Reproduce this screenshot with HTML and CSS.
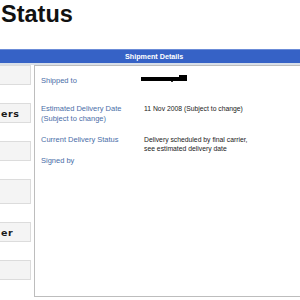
FILE: index.html
```html
<!DOCTYPE html>
<html lang="en">
<head>
    <meta charset="UTF-8">
    <title>Shipment Status</title>
    <link rel="stylesheet" href="styles.css">
</head>
<body>
    <div class="page">
        <h1 class="title">Status</h1>

        <div class="bar">Shipment Details</div>
        <div class="bar-line"></div>

        <div class="content">
            <!-- left menu, mostly outside the window -->
            <div class="sidebar">
                <div class="side-item"></div>
                <div class="side-item">ers</div>
                <div class="side-item"></div>
                <div class="side-item tall"></div>
                <div class="side-item">er</div>
                <div class="side-item"></div>
            </div>

            <div class="panel">
                <div class="details">
                    <div class="label">Shipped to</div>
                    <div class="value">
                        <svg class="redact" width="46" height="8" viewBox="0 0 46 8">
                            <rect x="0" y="2" width="40" height="4" fill="#000"/>
                            <rect x="38" y="0" width="8" height="6" fill="#000"/>
                            <rect x="30" y="6" width="2" height="1" fill="#333"/>
                        </svg>
                    </div>

                    <div class="label">Estimated Delivery Date<br>(Subject to change)</div>
                    <div class="value">11 Nov 2008 (Subject to change)</div>

                    <div class="label">Current Delivery Status</div>
                    <div class="value">Delivery scheduled by final carrier,<br>see estimated delivery date</div>

                    <div class="label">Signed by</div>
                    <div class="value"></div>
                </div>
            </div>
        </div>
    </div>
</body>
</html>
```

FILE: styles.css
```css
body {
    margin: 0;
    font-family: "Liberation Sans", Arial, sans-serif;
    background-color: #fff;
    overflow: hidden;
}
.page {
    width: 300px;
    height: 300px;
}
.title {
    margin: 0;
    height: 49px;
    padding: 2px 0 0 1px;
    box-sizing: border-box;
    font-size: 23.5px;
    font-weight: bold;
    color: #111;
    line-height: 24px;
}
.bar {
    height: 14px;
    background-color: #3662c6;
    border-top: 1px solid #6b8cd8;
    box-sizing: border-box;
    color: #fff;
    font-size: 7.2px;
    font-weight: bold;
    line-height: 13px;
    padding-left: 125px;
}
.bar-line {
    height: 2px;
    background-color: #d8dfe9;
}
.content {
    display: flex;
    gap: 3px;
    height: 234px;
}
.sidebar {
    width: 31px;
    flex-shrink: 0;
    display: flex;
    flex-direction: column;
    gap: 18px;
}
.side-item {
    height: 20px;
    box-sizing: border-box;
    background-color: #f4f4f4;
    border: 1px solid #dcdcdc;
    border-left: none;
    display: flex;
    align-items: center;
    padding-left: 1px;
    white-space: nowrap;
    font-family: "DejaVu Sans", Verdana, sans-serif;
    font-size: 9.5px;
    font-weight: bold;
    letter-spacing: 0.6px;
    color: #1a1a1a;
}
.side-item.tall {
    height: 25px;
}
.panel {
    flex: 1;
    height: 232px;
    border: 1px solid #bdbdbd;
    border-right: none;
    padding: 10px 0 0 6px;
    box-sizing: border-box;
}
.details {
    display: grid;
    grid-template-columns: 103px 1fr;
    grid-template-rows: 28px 31px 21px 10px;
}
.label {
    font-size: 7.5px;
    line-height: 10px;
    color: #4a6ea8;
}
.value {
    font-size: 6.8px;
    line-height: 9px;
    color: #1a1a1a;
}
.redact {
    display: block;
    margin: -1px 0 0 -3px;
}
```
